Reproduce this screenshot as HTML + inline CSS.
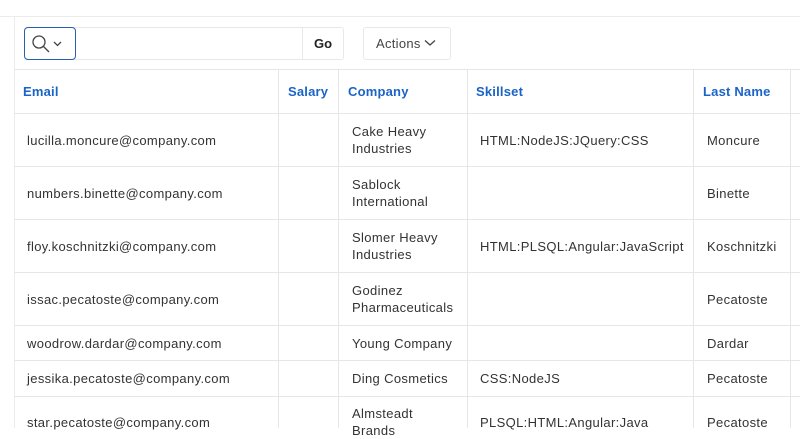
<!DOCTYPE html>
<html><head><style>
*{margin:0;padding:0;box-sizing:border-box}
body{width:800px;height:428px;overflow:hidden;background:#fff;font-family:"Liberation Sans",sans-serif;position:relative;color:#222}
.a{position:absolute}
.hl{position:absolute;left:14px;right:0;height:1px;background:#e6e6e6}
.vl{position:absolute;top:70px;bottom:0;width:1px;background:#e6e6e6}
.h{position:absolute;top:84px;font-size:13px;font-weight:bold;color:#1a64c8;letter-spacing:0.2px}
.c{position:absolute;font-size:13px;color:#333;line-height:17px;letter-spacing:0.35px}
</style></head><body>
<div class="a" style="left:0;top:16px;width:800px;height:1px;background:#ececec"></div>
<div class="a" style="left:14px;top:16px;width:1px;height:412px;background:#ececec"></div>
<div class="a" style="left:24px;top:27px;width:320px;height:33px;border:1px solid #e8e8e8;border-radius:3px"></div>
<div class="a" style="left:302px;top:27px;width:1px;height:33px;background:#e8e8e8"></div>
<div class="a" style="left:24px;top:27px;width:52px;height:33px;border:1.5px solid #2a5fb0;border-radius:4px"></div>
<svg class="a" style="left:31px;top:33px" width="36" height="22" viewBox="0 0 36 22"><circle cx="8" cy="9" r="6" fill="none" stroke="#444" stroke-width="1.3"/><path d="M12.5 13.5L18 19" stroke="#444" stroke-width="1.3"/><path d="M23 9l3.5 3.5L30 9" fill="none" stroke="#444" stroke-width="1.3"/></svg>
<div class="a" style="left:302px;top:36px;width:42px;text-align:center;font-size:13px;font-weight:bold;color:#222">Go</div>
<div class="a" style="left:363px;top:27px;width:88px;height:33px;border:1px solid #e8e8e8;border-radius:3px"></div>
<div class="a" style="left:376px;top:36px;font-size:13px;color:#444;letter-spacing:0.3px">Actions</div>
<svg class="a" style="left:424px;top:39px" width="12" height="8"><path d="M1 1.5l5 4.5 5-4.5" fill="none" stroke="#444" stroke-width="1.3"/></svg>
<div class="hl" style="top:69px"></div>
<div class="hl" style="top:113px"></div>
<div class="hl" style="top:166px"></div>
<div class="hl" style="top:219px"></div>
<div class="hl" style="top:272px"></div>
<div class="hl" style="top:325px"></div>
<div class="hl" style="top:360px"></div>
<div class="hl" style="top:396px"></div>
<div class="vl" style="left:278px"></div>
<div class="vl" style="left:338px"></div>
<div class="vl" style="left:467px"></div>
<div class="vl" style="left:693px"></div>
<div class="vl" style="left:790px"></div>
<div class="h" style="left:23px">Email</div>
<div class="h" style="left:288px">Salary</div>
<div class="h" style="left:348px">Company</div>
<div class="h" style="left:476px">Skillset</div>
<div class="h" style="left:703px">Last Name</div>

<div class="c" style="left:27px;top:132px">lucilla.moncure@company.com</div>
<div class="c" style="left:352px;top:123px">Cake Heavy<br>Industries</div>
<div class="c" style="left:480px;top:132px">HTML:NodeJS:JQuery:CSS</div>
<div class="c" style="left:707px;top:132px">Moncure</div>

<div class="c" style="left:27px;top:185px">numbers.binette@company.com</div>
<div class="c" style="left:352px;top:176px">Sablock<br>International</div>
<div class="c" style="left:707px;top:185px">Binette</div>

<div class="c" style="left:27px;top:238px">floy.koschnitzki@company.com</div>
<div class="c" style="left:352px;top:229px">Slomer Heavy<br>Industries</div>
<div class="c" style="left:480px;top:238px">HTML:PLSQL:Angular:JavaScript</div>
<div class="c" style="left:707px;top:238px">Koschnitzki</div>

<div class="c" style="left:27px;top:291px">issac.pecatoste@company.com</div>
<div class="c" style="left:352px;top:282px">Godinez<br>Pharmaceuticals</div>
<div class="c" style="left:707px;top:291px">Pecatoste</div>

<div class="c" style="left:27px;top:335px">woodrow.dardar@company.com</div>
<div class="c" style="left:352px;top:335px">Young Company</div>
<div class="c" style="left:707px;top:335px">Dardar</div>

<div class="c" style="left:27px;top:370px">jessika.pecatoste@company.com</div>
<div class="c" style="left:352px;top:370px">Ding Cosmetics</div>
<div class="c" style="left:480px;top:370px">CSS:NodeJS</div>
<div class="c" style="left:707px;top:370px">Pecatoste</div>

<div class="c" style="left:27px;top:414px">star.pecatoste@company.com</div>
<div class="c" style="left:352px;top:405px">Almsteadt<br>Brands</div>
<div class="c" style="left:480px;top:414px">PLSQL:HTML:Angular:Java</div>
<div class="c" style="left:707px;top:414px">Pecatoste</div>
</body></html>
